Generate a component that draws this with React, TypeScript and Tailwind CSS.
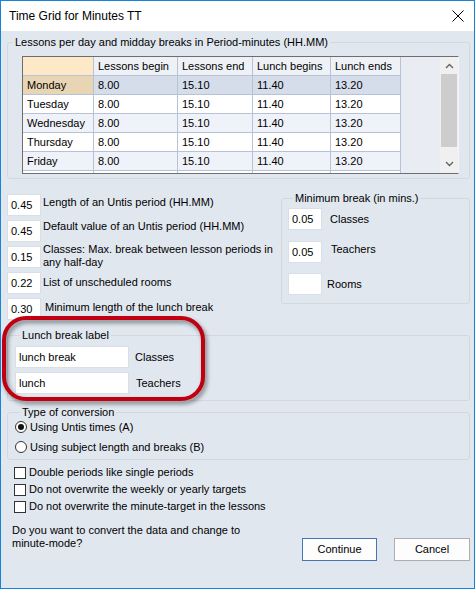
import React from 'react';

const days = [
  { name: 'Monday', selected: true },
  { name: 'Tuesday' },
  { name: 'Wednesday', alt: true },
  { name: 'Thursday' },
  { name: 'Friday', alt: true },
];

const colW = ['w-[71px]', 'w-[84px]', 'w-[75px]', 'w-[78px]', 'w-[70px]'];
const headers = ['', 'Lessons begin', 'Lessons end', 'Lunch begins', 'Lunch ends'];
const values = ['8.00', '15.10', '11.40', '13.20'];

const Legend = ({ children }: { children: React.ReactNode }) => (
  <legend className="ml-[5px] px-[2px] text-[11px] leading-[13px]">{children}</legend>
);

const Box = ({ value = '', className = 'w-[34px]' }: { value?: string; className?: string }) => (
  <div className={`${className} h-[22px] shrink-0 bg-white border border-[#dadfe6] px-[3px] text-[11px] leading-[20px]`}>{value}</div>
);

const TimeTable = () => (
  <div className="ml-[14px] w-[437px] h-[118px] flex border-l border-t border-[#6e6e6e] border-r-[#f4f4f4] border-b border-r bg-[#e9edf3]">
    <div className="flex-1 overflow-hidden">
      <div className="flex">
        {headers.map((h, i) => (
          <div
            key={i}
            className={`${colW[i]} h-[19px] shrink-0 border-r border-b border-[#b7c2d6] px-[4px] text-[11px] leading-[18px] ${i === 0 ? 'bg-[#fde8c7]' : 'bg-[#eef1f6]'}`}
          >
            {h}
          </div>
        ))}
      </div>
      {[...days, { name: '', alt: false, selected: false }].map((d, r) => (
        <div key={r} className="flex">
          {[d.name, ...values].map((v, i) => {
            let bg = 'bg-white';
            if (d.selected) bg = i === 0 ? 'bg-[#e8d5b4]' : 'bg-[#d5dcea]';
            else if (d.alt) bg = 'bg-[#eff2f8]';
            return (
              <div
                key={i}
                className={`${colW[i]} h-[19px] shrink-0 border-r border-b border-[#b7c2d6] px-[4px] text-[11px] leading-[18px] ${bg}`}
              >
                {d.name ? v : ''}
              </div>
            );
          })}
        </div>
      ))}
    </div>
    <div className="w-[18px] shrink-0 bg-[#f0f0f0] flex flex-col items-center">
      <svg width="9" height="17" viewBox="0 0 9 17" className="shrink-0">
        <path d="M1 11 L4.5 7.5 L8 11" fill="none" stroke="#606060" strokeWidth="1.3" />
      </svg>
      <div className="w-[16px] h-[73px] bg-[#cdcdcd]" />
      <div className="flex-1" />
      <svg width="9" height="17" viewBox="0 0 9 17" className="shrink-0">
        <path d="M1 6 L4.5 9.5 L8 6" fill="none" stroke="#606060" strokeWidth="1.3" />
      </svg>
    </div>
  </div>
);

const leftRows: { value: string; label: React.ReactNode; cls: string }[] = [
  { value: '0.45', label: 'Length of an Untis period (HH.MM)', cls: 'mt-[2px]' },
  { value: '0.45', label: 'Default value of an Untis period (HH.MM)', cls: 'mt-0' },
  { value: '0.15', label: <>Classes: Max. break between lesson periods in<br />any half-day</>, cls: 'mt-[-3px]' },
  { value: '0.22', label: 'List of unscheduled rooms', cls: 'mt-[4px]' },
  { value: '0.30', label: 'Minimum length of the lunch break', cls: 'mt-[3px] ml-[2px]' },
];

const checks = [
  'Double periods like single periods',
  'Do not overwrite the weekly or yearly targets',
  'Do not overwrite the minute-target in the lessons',
];

export default function App() {
  return (
    <div
      className="relative w-[475px] h-[589px] border border-[#1883d7] bg-[#e1e7ef] text-black flex flex-col"
      style={{ fontFamily: '"Liberation Sans", Arial, sans-serif' }}
    >
      <div className="h-[30px] shrink-0 bg-white flex items-center justify-between pl-[8px] pr-[10px]">
        <span className="text-[12px]">Time Grid for Minutes TT</span>
        <svg width="12" height="12" viewBox="0 0 12 12">
          <path d="M0.5 0.5 L11.5 11.5 M11.5 0.5 L0.5 11.5" stroke="#000" strokeWidth="1" />
        </svg>
      </div>

      <div className="flex-1 pl-[6px] pr-[4px] flex flex-col">
        <fieldset className="mt-[5px] border border-[#d3d8df] rounded-[3px] pb-[4px]">
          <Legend>Lessons per day and midday breaks in Period-minutes (HH.MM)</Legend>
          <div className="pt-[7px]">
            <TimeTable />
          </div>
        </fieldset>

        <div className="flex items-start">
          <div className="flex-1 mt-[15px] flex flex-col gap-[4px]">
            {leftRows.map((r, i) => (
              <div key={i} className="flex h-[22px] items-start gap-[2px]">
                <Box value={r.value} />
                <div className={`text-[11px] leading-[13px] ${r.cls}`}>{r.label}</div>
              </div>
            ))}
          </div>
          <fieldset className="mt-[13px] w-[189px] shrink-0 border border-[#d3d8df] rounded-[3px] pl-[6px] pt-[3px] pb-[8px]">
            <Legend>Minimum break (in mins.)</Legend>
            <div className="flex items-center">
              <Box value="0.05" />
              <span className="ml-[8px] text-[11px]">Classes</span>
            </div>
            <div className="mt-[11px] flex items-center">
              <Box value="0.05" />
              <span className="ml-[9px] mt-[-5px] text-[11px]">Teachers</span>
            </div>
            <div className="mt-[10px] flex items-center">
              <Box />
              <span className="ml-[5px] text-[11px]">Rooms</span>
            </div>
          </fieldset>
        </div>

        <fieldset className="mt-[9px] border border-[#d3d8df] rounded-[3px] pl-[7px] pt-[4px] pb-[6px]">
          <Legend>Lunch break label</Legend>
          <div className="flex items-center">
            <Box value="lunch break" className="w-[114px]" />
            <span className="ml-[6px] text-[11px]">Classes</span>
          </div>
          <div className="mt-[4px] flex items-center">
            <Box value="lunch" className="w-[114px]" />
            <span className="ml-[7px] text-[11px]">Teachers</span>
          </div>
        </fieldset>

        <fieldset className="mt-[5px] border border-[#d3d8df] rounded-[3px] pl-[7px] pb-[4px] flex flex-col gap-[4px]">
          <Legend>Type of conversion</Legend>
          <div className="h-[16px] flex items-center gap-[3px]">
            <span className="w-[12px] h-[12px] rounded-full border border-[#333] bg-white flex items-center justify-center">
              <span className="w-[6px] h-[6px] rounded-full bg-[#111]" />
            </span>
            <span className="text-[11px]">Using Untis times (A)</span>
          </div>
          <div className="h-[16px] flex items-center gap-[3px]">
            <span className="w-[12px] h-[12px] rounded-full border border-[#333] bg-white" />
            <span className="text-[11px]">Using subject length and breaks (B)</span>
          </div>
        </fieldset>

        <div className="mt-[4px] pl-[7px] flex flex-col">
          {checks.map((c) => (
            <div key={c} className="h-[17px] flex items-center gap-[3px]">
              <span className="w-[12px] h-[12px] border border-[#333] bg-white" />
              <span className="text-[11px]">{c}</span>
            </div>
          ))}
        </div>

        <div className="mt-[9px] flex items-start">
          <div className="ml-[5px] w-[270px] text-[11px] leading-[13px]">
            Do you want to convert the data and change to<br />minute-mode?
          </div>
          <div className="ml-auto mt-[14px] flex gap-[17px]">
            <button className="w-[75px] h-[23px] border border-[#4a73b5] bg-[#fdfdfd] text-[11px]">Continue</button>
            <button className="w-[76px] h-[23px] border border-[#adadad] bg-[#fdfdfd] text-[11px]">Cancel</button>
          </div>
        </div>
      </div>

      <div className="absolute left-[1px] top-[315px] w-[203px] h-[85px] rounded-[24px] border-[4px] border-[#c00010] drop-shadow-[2px_3px_2px_rgba(0,0,0,0.45)]" />
    </div>
  );
}
